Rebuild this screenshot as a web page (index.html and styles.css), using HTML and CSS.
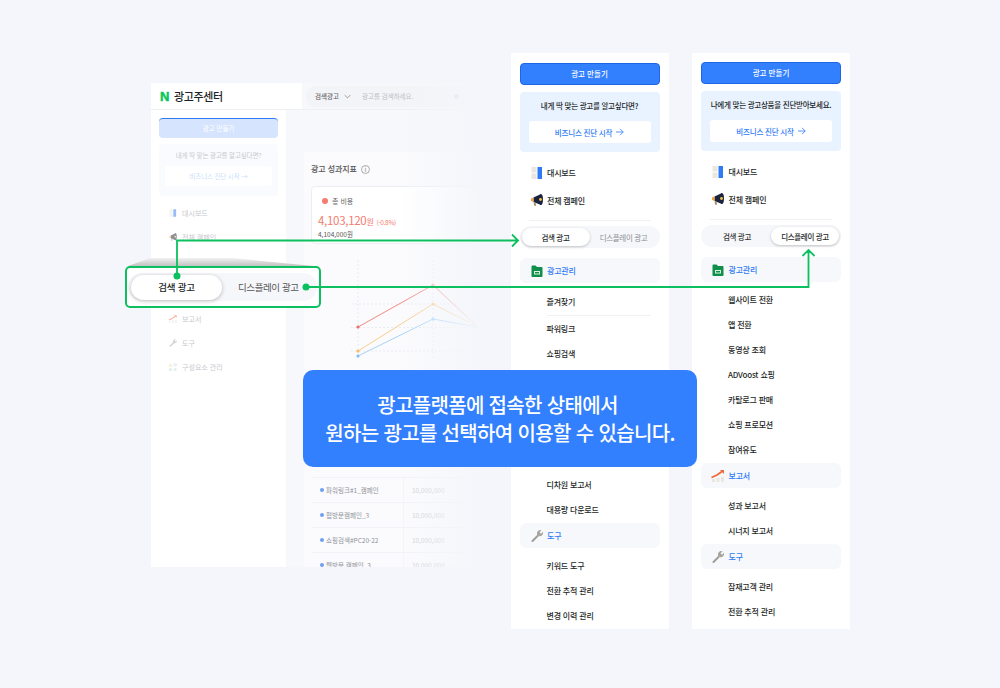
FILE: index.html
```html
<!DOCTYPE html>
<html lang="ko">
<head>
    <meta charset="UTF-8">
    <title>광고주센터</title>
    <link rel="stylesheet" href="styles.css">
</head>

<body>
    <div class="stage">

        <!-- faded dashboard behind -->
        <div class="dash">
            <header class="dash-top">
                <div class="dash-logo"><span class="n-mark">N</span>광고주센터</div>
                <div class="dash-search">
                    <span class="dash-search-type">검색광고</span>
                    <svg class="chev" viewBox="0 0 10 6"><path d="M1 1l4 4 4-4" fill="none" stroke="#777" stroke-width="1"/></svg>
                    <span class="dash-search-hint">광고를 검색하세요.</span>
                    <span class="dash-search-dot"></span>
                </div>
            </header>
            <div class="dash-body">
                <aside class="dash-side">
                    <div class="dash-make">광고 만들기</div>
                    <div class="dash-promo">
                        <p>내게 딱 맞는 광고를 알고싶다면?</p>
                        <div class="dash-promo-btn">비즈니스 진단 시작 →</div>
                    </div>
                    <div class="dash-item dash-first"><svg class="ic16" viewBox="0 0 16 16"><use href="#ic-board"/></svg>대시보드</div>
                    <div class="dash-item"><svg class="ic16" viewBox="0 0 16 16"><use href="#ic-mega"/></svg>전체 캠페인</div>
                    <div class="dash-spacer"></div>
                    <div class="dash-item"><svg class="ic16" viewBox="0 0 16 16"><use href="#ic-report"/></svg>보고서</div>
                    <div class="dash-item"><svg class="ic16" viewBox="0 0 16 16"><use href="#ic-tool"/></svg>도구</div>
                    <div class="dash-item"><svg class="ic16" viewBox="0 0 16 16"><use href="#ic-parts"/></svg>구성요소 관리</div>
                </aside>
                <main class="dash-main">
                    <div class="kpi-panel">
                        <div class="kpi-title">광고 성과지표 <span class="info">i</span></div>
                        <div class="kpi-card">
                            <div class="kpi-label"><span class="kpi-dot"></span>총 비용</div>
                            <div class="kpi-value">4,103,120<small>원</small> <em>(-0.8%)</em></div>
                            <div class="kpi-sub">4,104,000원</div>
                        </div>
                        <div class="table">
                            <div class="table-row"><span class="table-name">파워링크#1_캠페인</span><span class="table-num">10,000,000</span></div>
                            <div class="table-row"><span class="table-name">협방문캠페인_3</span><span class="table-num">10,000,000</span></div>
                            <div class="table-row"><span class="table-name">쇼핑검색#PC20-22</span><span class="table-num">10,000,000</span></div>
                            <div class="table-row"><span class="table-name">웹방문 캠페인_3</span><span class="table-num">10,000,000</span></div>
                        </div>
                    </div>
                </main>
            </div>
            <svg class="chart" viewBox="0 0 170 100">
                <path d="M7 0v100M82 0v100M0 44h130M0 67.500h130M0 91h130" fill="none" stroke="#e9ebf1" stroke-width="1" stroke-dasharray="2 2"/>
                <path d="M7 67L82 25l45 42" fill="none" stroke="#f08a80" stroke-width="1"/>
                <path d="M7 91L82 44l45 23" fill="none" stroke="#f9cd8c" stroke-width="1"/>
                <path d="M7 96L82 59l45 8" fill="none" stroke="#a7d2f7" stroke-width="1"/>
                <circle cx="7" cy="67" r="1.6" fill="#ee7168"/>
                <circle cx="7" cy="91" r="1.6" fill="#f9bc62"/>
                <circle cx="7" cy="96" r="1.6" fill="#7fbdf5"/>
                <circle cx="82" cy="25" r="1.6" fill="#f5b0a8"/>
                <circle cx="82" cy="44" r="1.6" fill="#f9cd8c"/>
                <circle cx="82" cy="59" r="1.6" fill="#a7d2f7"/>
            </svg>
            <div class="dash-fade"></div>
        </div>

        <!-- menu for search ads -->
        <nav class="menu menu-search">
            <div class="make-btn">광고 만들기</div>
            <div class="promo">
                <p>내게 딱 맞는 광고를 알고싶다면?</p>
                <div class="promo-btn">비즈니스 진단 시작 <svg class="arrow" viewBox="0 0 10 10"><path d="M0 5h9M5 1l4 4-4 4" fill="none" stroke="#2f7bf6" stroke-width="1"/></svg></div>
            </div>
            <div class="menu-top"><svg class="ic16" viewBox="0 0 16 16"><use href="#ic-board"/></svg>대시보드</div>
            <div class="menu-top"><svg class="ic16" viewBox="0 0 16 16"><use href="#ic-mega"/></svg>전체 캠페인</div>
            <hr class="line">
            <div class="tabs">
                <span class="tab on">검색 광고</span>
                <span class="tab off">디스플레이 광고</span>
            </div>
            <div class="section"><svg class="ic16" viewBox="0 0 16 16"><use href="#ic-folder"/></svg>광고관리</div>
            <div class="sub">즐겨찾기</div>
            <hr class="line line-sub">
            <div class="sub">파워링크</div>
            <div class="sub">쇼핑검색</div>
            <div class="menu-gap"></div>
            <div class="sub">디차원 보고서</div>
            <div class="sub">대용량 다운로드</div>
            <div class="section"><svg class="ic16" viewBox="0 0 16 16"><use href="#ic-tool"/></svg>도구</div>
            <div class="sub">키워드 도구</div>
            <div class="sub">전환 추적 관리</div>
            <div class="sub">변경 이력 관리</div>
        </nav>

        <!-- menu for display ads -->
        <nav class="menu menu-display">
            <div class="make-btn">광고 만들기</div>
            <div class="promo">
                <p>나에게 맞는 광고상품을 진단받아보세요.</p>
                <div class="promo-btn">비즈니스 진단 시작 <svg class="arrow" viewBox="0 0 10 10"><path d="M0 5h9M5 1l4 4-4 4" fill="none" stroke="#2f7bf6" stroke-width="1"/></svg></div>
            </div>
            <div class="menu-top"><svg class="ic16" viewBox="0 0 16 16"><use href="#ic-board"/></svg>대시보드</div>
            <div class="menu-top"><svg class="ic16" viewBox="0 0 16 16"><use href="#ic-mega"/></svg>전체 캠페인</div>
            <hr class="line">
            <div class="tabs">
                <span class="tab plain">검색 광고</span>
                <span class="tab on">디스플레이 광고</span>
            </div>
            <div class="section"><svg class="ic16" viewBox="0 0 16 16"><use href="#ic-folder"/></svg>광고관리</div>
            <div class="sub">웹사이트 전환</div>
            <div class="sub">앱 전환</div>
            <div class="sub">동영상 조회</div>
            <div class="sub">ADVoost 쇼핑</div>
            <div class="sub">카탈로그 판매</div>
            <div class="sub">쇼핑 프로모션</div>
            <div class="sub">참여유도</div>
            <div class="section"><svg class="ic16" viewBox="0 0 16 16"><use href="#ic-report"/></svg>보고서</div>
            <div class="sub">성과 보고서</div>
            <div class="sub">시너지 보고서</div>
            <div class="section"><svg class="ic16" viewBox="0 0 16 16"><use href="#ic-tool"/></svg>도구</div>
            <div class="sub">잠재고객 관리</div>
            <div class="sub">전환 추적 관리</div>
        </nav>

        <!-- green callout -->
        <div class="callout-shade"></div>
        <div class="callout">
            <span class="callout-pill">검색 광고</span>
            <span class="callout-text">디스플레이 광고</span>
        </div>

        <svg class="links" viewBox="0 0 1000 688">
            <path d="M177 276V240.500H518M512 234.500l6 6-6 6" fill="none" stroke="#0cc05f" stroke-width="1.800"/>
            <path d="M306 287H808.500V250M802.500 256l6-6 6 6" fill="none" stroke="#0cc05f" stroke-width="1.800"/>
            <circle cx="177" cy="276" r="3.500" fill="#0cc05f"/>
            <circle cx="306" cy="287" r="3.500" fill="#0cc05f"/>
        </svg>

        <div class="notice">
            <p class="notice-first">광고플랫폼에 접속한 상태에서</p>
            <p>원하는 광고를 선택하여 이용할 수 있습니다.</p>
        </div>
    </div>

    <svg class="icon-defs" width="0" height="0">
        <symbol id="ic-board" viewBox="0 0 16 16">
            <path d="M2.500 2h5v5.500h-5zM2.500 8.500h5V14h-5z" fill="#ece6e0"/>
            <path d="M8.500 2h4.500v12H8.500z" fill="#2f7bf6"/>
        </symbol>
        <symbol id="ic-mega" viewBox="0 0 16 16">
            <path d="M4.500 5.500L12 2v11L4.500 10z" fill="#1b2340"/>
            <ellipse cx="12" cy="7.500" rx="2" ry="5.500" fill="#1b2340"/>
            <path d="M2 6.500L4.500 5.500V10L2 9z" fill="#f0a63c"/>
            <path d="M4.500 10.300l2 .5 .7 3H5.200z" fill="#a38f6a"/>
            <circle cx="11.500" cy="7.500" r="1.400" fill="#f5c542"/>
        </symbol>
        <symbol id="ic-folder" viewBox="0 0 16 16">
            <path d="M2.500 3.500a1 1 0 0 1 1-1h3l1.500 1.500h4.500a1 1 0 0 1 1 1V13a1 1 0 0 1-1 1H3.500a1 1 0 0 1-1-1z" fill="#0f8f49"/>
            <path d="M5 8h6v3.500H5z" fill="#d8f3e2"/>
            <path d="M6 9h4v1.500H6z" fill="#0f8f49"/>
        </symbol>
        <symbol id="ic-report" viewBox="0 0 16 16">
            <path d="M2 11h3v3H2zM6.500 10h3v4h-3zM11 9h3v5h-3z" fill="#ece6e0"/>
            <path d="M1.500 9.500L7 7l5-3.500" fill="none" stroke="#f0683c" stroke-width="1.800"/>
            <path d="M10 2h4v4z" fill="#f0683c"/>
        </symbol>
        <symbol id="ic-tool" viewBox="0 0 16 16">
            <path d="M3.500 13L8.500 8" fill="none" stroke="#a09d97" stroke-width="2" stroke-linecap="round"/>
            <path d="M8 6.500a3.500 3.500 0 0 1 4.500-4.200L10.500 4.300l1.500 1.500 2-2A3.500 3.500 0 0 1 9.800 8.200z" fill="#a7a49e"/>
        </symbol>
        <symbol id="ic-parts" viewBox="0 0 16 16">
            <path d="M1 7l3-5 3 5z" fill="#f5d98c"/>
            <rect x="9" y="2" width="5" height="5" fill="#cfe0f7"/>
            <circle cx="4" cy="12" r="2.500" fill="#bfe6cc"/>
            <circle cx="11.500" cy="12" r="2.500" fill="#bfe6cc"/>
        </symbol>
    </svg>
</body>

</html>
```

FILE: styles.css
```css
* {
    box-sizing: border-box;
}

body {
    margin: 0;
    padding: 0;
    background-color: #f4f6fb;
    font-family: "Noto Sans CJK KR", "Liberation Sans", sans-serif;
    color: #1c1f26;
}

p {
    margin: 0;
}

.stage {
    position: relative;
    width: 1000px;
    height: 688px;
    overflow: hidden;
}

.ic16 {
    width: 16px;
    height: 16px;
    flex: none;
}

.icon-defs {
    position: absolute;
}

/* dashboard */
.dash {
    position: absolute;
    left: 151px;
    top: 83px;
    width: 330px;
    height: 484px;
    overflow: hidden;
    background-color: #f7f8fb;
}

.dash-top {
    display: flex;
    align-items: center;
    height: 27px;
    border-bottom: 1px solid #eef0f4;
}

.dash-logo {
    display: flex;
    align-items: center;
    gap: 5px;
    width: 151px;
    height: 26px;
    padding-left: 9px;
    background-color: #fff;
    font-size: 11px;
    font-weight: 500;
    letter-spacing: -0.4px;
}

.n-mark {
    color: #03c75a;
    font-family: "Liberation Sans", sans-serif;
    font-weight: 700;
    font-size: 13px;
    -webkit-text-stroke: 0.5px #03c75a;
}

.dash-search {
    display: flex;
    align-items: center;
    gap: 5px;
    width: 170px;
    height: 21px;
    margin-left: 4px;
    padding-left: 9px;
    border-radius: 11px;
    background-color: #f3f4f8;
    font-size: 6.500px;
    color: #bbbec6;
}

.dash-search-type {
    color: #666;
    font-weight: 500;
}

.chev {
    width: 7px;
    height: 5px;
}

.dash-search-hint {
    margin-left: 6px;
}

.dash-search-dot {
    width: 5px;
    height: 5px;
    margin-left: 36px;
    border-radius: 50%;
    background-color: #d5d7dc;
}

.dash-body {
    display: flex;
    height: 457px;
}

.dash-side {
    width: 136px;
    padding: 8px 8px 0;
    background-color: #fff;
}

.dash-make {
    height: 20px;
    border-top: 1px solid #2f7bf6;
    border-radius: 4px;
    background-color: #d6e5fd;
    color: #fff;
    font-size: 6.500px;
    line-height: 19px;
    text-align: center;
}

.dash-promo {
    height: 52px;
    margin-top: 6px;
    padding-top: 6px;
    border-radius: 4px;
    background-color: #fafbfe;
    font-size: 6.500px;
    letter-spacing: -0.15px;
    color: #c6c9cf;
    text-align: center;
}

.dash-promo-btn {
    height: 20px;
    margin: 6px 6px 0;
    border-radius: 3px;
    background-color: #fff;
    color: #cbdffb;
    font-size: 6.500px;
    line-height: 20px;
}

.dash-item {
    display: flex;
    align-items: center;
    gap: 4px;
    height: 24px;
    padding-left: 9px;
    font-size: 7px;
    color: #c6c8cd;
}

.dash-item .ic16 {
    width: 10px;
    height: 10px;
    opacity: 0.5;
}

.dash-first {
    margin-top: 5px;
}

.dash-spacer {
    height: 58px;
}

.dash-main {
    flex: 1;
    padding: 42px 0 0 18px;
}

.kpi-panel {
    height: 415px;
    border-radius: 4px 0 0 0;
    background-color: #fbfbfd;
}

.kpi-title {
    padding: 11px 7px 0;
    height: 34px;
    font-size: 8px;
    font-weight: 500;
    letter-spacing: -0.1px;
    color: #555;
}

.info {
    display: inline-block;
    width: 9px;
    height: 9px;
    margin-left: 2px;
    border: 1px solid #aaa;
    border-radius: 50%;
    font-size: 6px;
    line-height: 7px;
    text-align: center;
    color: #999;
}

.kpi-card {
    width: 170px;
    height: 58px;
    margin-left: 7px;
    padding: 8px 6px;
    border: 1px solid #eceef2;
    border-radius: 4px;
    background-color: #fff;
}

.kpi-label {
    display: flex;
    align-items: center;
    gap: 4px;
    padding-left: 4px;
    font-size: 7px;
    line-height: 12px;
    color: #666;
}

.kpi-dot {
    width: 6px;
    height: 6px;
    border-radius: 50%;
    background-color: #f37b70;
}

.kpi-value {
    margin-top: 6px;
    color: #f37b70;
    font-size: 11.500px;
    letter-spacing: -0.3px;
    line-height: 14px;
    white-space: nowrap;
}

.kpi-value small {
    font-size: 8px;
}

.kpi-value em {
    font-size: 6.500px;
    font-style: normal;
}

.kpi-sub {
    font-size: 6.500px;
    line-height: 10px;
    color: #555;
}

.table {
    width: 170px;
    margin: 233px 0 0 7px;
}

.table-row {
    display: flex;
    align-items: center;
    height: 25px;
    border-top: 1px solid #f2f3f6;
    font-size: 6.500px;
}

.table-name {
    position: relative;
    width: 93px;
    height: 100%;
    padding-left: 15px;
    border-right: 1px solid #f4f5f7;
    line-height: 24px;
    color: #8f929a;
    white-space: nowrap;
}

.table-name::before {
    content: "";
    position: absolute;
    left: 9px;
    top: 10px;
    width: 4px;
    height: 4px;
    border-radius: 50%;
    background-color: #6f9ff2;
}

.table-num {
    padding-left: 8px;
    color: #c9cbd1;
}

.chart {
    position: absolute;
    left: 200px;
    top: 177px;
    width: 170px;
    height: 100px;
}

.dash-fade {
    position: absolute;
    inset: 0;
    background: linear-gradient(to right, rgba(244, 246, 251, 0) 75%, #f4f6fb 100%);
}

/* menus */
.menu {
    position: absolute;
    top: 53px;
    width: 158px;
    height: 576px;
    padding: 9px 9px 0;
    background-color: #fff;
    overflow: hidden;
    font-size: 8px;
    letter-spacing: -0.2px;
}

.menu-search {
    left: 510.500px;
    padding-top: 10px;
}

.menu-display {
    left: 692px;
}

.make-btn {
    height: 22px;
    border: 1px solid #1f66e5;
    border-radius: 4px;
    background-color: #3380ff;
    color: #fff;
    font-size: 7.500px;
    font-weight: 500;
    letter-spacing: 0;
    line-height: 20px;
    text-align: center;
}

.promo {
    height: 60px;
    margin-top: 7px;
    padding-top: 8px;
    border-radius: 4px;
    background-color: #e9f2ff;
    text-align: center;
    font-size: 7.500px;
    font-weight: 500;
    letter-spacing: -0.25px;
}

.promo p {
    line-height: 12px;
    white-space: nowrap;
}

.promo-btn {
    display: flex;
    align-items: center;
    justify-content: center;
    gap: 4px;
    height: 22px;
    margin: 9px 9px 0;
    border-radius: 3px;
    background-color: #fff;
    color: #2f7bf6;
    font-weight: 500;
    letter-spacing: -0.2px;
}

.arrow {
    width: 8px;
    height: 8px;
}

.menu-top {
    display: flex;
    align-items: center;
    gap: 2.500px;
    height: 27.500px;
    padding-left: 9px;
    font-weight: 500;
}

.menu-top:nth-of-type(3) {
    margin-top: 7px;
}

.line {
    height: 1px;
    margin: 6px 9px 5px;
    border: 0;
    background-color: #eff1f5;
}

.tabs {
    display: flex;
    height: 22px;
    border-radius: 11px;
    background-color: #f6f7fa;
    padding: 2px;
    margin-bottom: 10px;
    font-size: 7.500px;
    letter-spacing: -0.35px;
}

.tab {
    flex: 1;
    display: flex;
    align-items: center;
    justify-content: center;
    border-radius: 10px;
    white-space: nowrap;
    font-weight: 500;
}

.tab.on {
    background-color: #fff;
    box-shadow: 0 1px 3px rgba(0, 0, 0, 0.22);
}

.tab.off {
    color: #8a8d94;
    font-weight: 400;
}

.tab.plain {
    color: #333;
}

.section {
    display: flex;
    align-items: center;
    gap: 2.500px;
    height: 25px;
    padding-left: 9px;
    border-radius: 6px;
    background-color: #f7f8fb;
    color: #2f7bf6;
    font-weight: 500;
}

.sub {
    height: 25px;
    padding-left: 27px;
    font-weight: 500;
    line-height: 25px;
    white-space: nowrap;
}

.section + .sub {
    margin-top: 5px;
}

.menu-search .tabs + .section + .sub {
    margin-top: 6px;
}

.sub + .section {
    margin-top: 1px;
}

.line-sub {
    margin: 1px 9px 0 27px;
}

.menu-gap {
    height: 106px;
}

/* green callout over the dashboard */
.callout-shade {
    position: absolute;
    left: 128px;
    top: 258px;
    width: 186px;
    height: 8px;
    background: linear-gradient(to bottom, #f2f2f2, #c2c2c2);
    clip-path: polygon(12% 0, 56% 0, 100% 100%, 0 100%);
}

.callout {
    position: absolute;
    left: 125px;
    top: 266px;
    width: 196px;
    height: 42px;
    display: flex;
    align-items: center;
    padding-left: 4px;
    border: 2px solid #0cc05f;
    border-radius: 5px;
    background-color: #fff;
    font-size: 9.500px;
    font-weight: 500;
    letter-spacing: -0.2px;
}

.callout::before {
    content: "";
    position: absolute;
    inset: 5px 2px 5px 1px;
    border-radius: 14px;
    background-color: #f6f7fa;
}

.callout-pill {
    position: relative;
    display: flex;
    align-items: center;
    justify-content: center;
    width: 91px;
    height: 25px;
    border-radius: 13px;
    background-color: #fff;
    box-shadow: 0 1px 4px rgba(0, 0, 0, 0.25);
}

.callout-text {
    position: relative;
    margin-left: 16px;
    color: #555;
    font-weight: 400;
    letter-spacing: -0.4px;
    white-space: nowrap;
}

.links {
    position: absolute;
    inset: 0;
    width: 1000px;
    height: 688px;
    pointer-events: none;
}

.notice {
    position: absolute;
    left: 303px;
    top: 370px;
    width: 394px;
    height: 97px;
    display: flex;
    flex-direction: column;
    justify-content: center;
    border-radius: 10px;
    background-color: #3380ff;
    color: #fff;
    font-size: 20px;
    font-weight: 500;
    letter-spacing: -0.65px;
    line-height: 28px;
    text-align: center;
}

.notice-first {
    padding-right: 5px;
}
```
